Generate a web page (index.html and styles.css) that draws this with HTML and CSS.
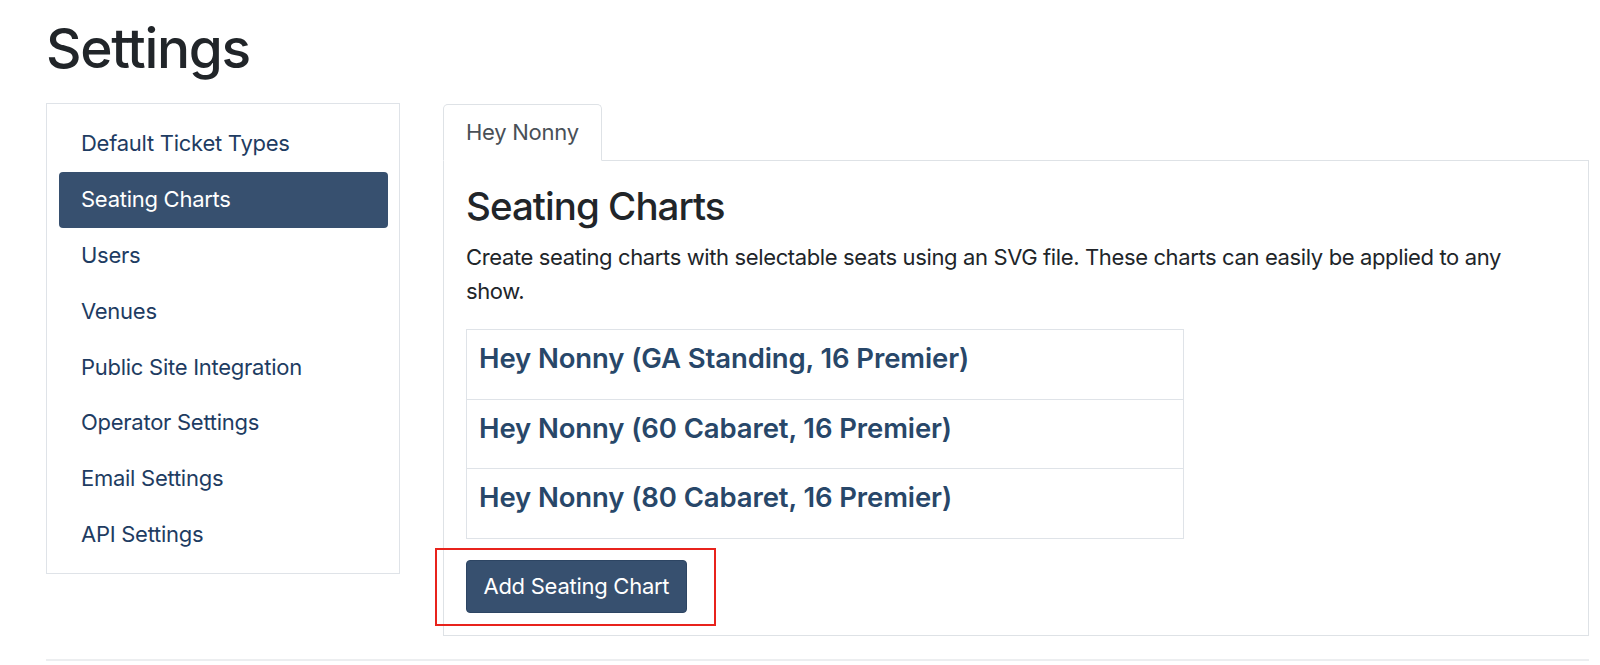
FILE: index.html
```html
<!DOCTYPE html>
<html lang="en">
<head>
<meta charset="utf-8">
<title>Settings</title>
<link rel="stylesheet" href="styles.css">
</head>
<body>
<div class="page">
  <h1 class="page-title">Settings</h1>
  <div class="layout">
    <aside class="sidebar">
      <nav class="side-nav">
        <a class="side-link" href="#">Default Ticket Types</a>
        <a class="side-link active" href="#">Seating Charts</a>
        <a class="side-link" href="#">Users</a>
        <a class="side-link" href="#">Venues</a>
        <a class="side-link" href="#">Public Site Integration</a>
        <a class="side-link" href="#">Operator Settings</a>
        <a class="side-link" href="#">Email Settings</a>
        <a class="side-link" href="#">API Settings</a>
      </nav>
    </aside>
    <main class="main">
      <div class="tabs">
        <a class="tab active" href="#">Hey Nonny</a>
      </div>
      <section class="panel">
        <h3 class="panel-title">Seating Charts</h3>
        <p class="panel-desc">Create seating charts with selectable seats using an SVG file. These charts can easily be applied to any show.</p>
        <div class="chart-list">
          <a class="chart-item" href="#"><h5 class="chart-name">Hey Nonny (GA Standing, 16 Premier)</h5></a>
          <a class="chart-item" href="#"><h5 class="chart-name">Hey Nonny (60 Cabaret, 16 Premier)</h5></a>
          <a class="chart-item" href="#"><h5 class="chart-name">Hey Nonny (80 Cabaret, 16 Premier)</h5></a>
        </div>
        <div class="action-wrap">
          <button class="btn-primary" type="button">Add Seating Chart</button>
        </div>
      </section>
    </main>
  </div>
  <hr class="divider">
</div>
</body>
</html>
```
FILE: styles.css
```css
* { box-sizing: border-box; }

html, body {
  margin: 0;
  padding: 0;
  background: #ffffff;
}

body {
  font-family: "Inter", "Noto Sans", "Liberation Sans", sans-serif;
  font-size: 22px;
  line-height: 1.5;
  color: #212529;
  letter-spacing: -0.012em;
}

.page {
  padding: 15px 11px 0 46px;
}

.page-title {
  margin: 0 0 22px 0;
  font-size: 55px;
  font-weight: 500;
  line-height: 1.2;
  color: #212529;
  letter-spacing: -0.024em;
}

.layout {
  display: flex;
  align-items: flex-start;
  gap: 43px;
}

.sidebar {
  width: 354px;
  flex: 0 0 354px;
  border: 1px solid #dfe3e8;
  padding: 12px 11px 11px 12px;
}

.side-nav {
  display: flex;
  flex-direction: column;
}

.side-link {
  display: block;
  padding: 11.4px 22px;
  line-height: 33px;
  color: #1e3c62;
  text-decoration: none;
  border-radius: 4px;
}

.side-link.active {
  background: #37506f;
  color: #ffffff;
}

.main {
  flex: 1 1 auto;
  margin-top: 1px;
}

.tabs {
  display: flex;
  border-bottom: 1px solid #dee2e6;
}

.tab {
  display: block;
  padding: 11px 22px;
  line-height: 33px;
  color: #495057;
  text-decoration: none;
  border: 1px solid #dee2e6;
  border-bottom-color: #ffffff;
  border-radius: 5px 5px 0 0;
  margin-bottom: -1px;
  background: #ffffff;
}

.panel {
  border: 1px solid #dee2e6;
  border-top: none;
  padding: 22px 22px 22px 22px;
}

.panel-title {
  margin: 0 0 12px 0;
  font-size: 38.5px;
  font-weight: 500;
  line-height: 1.2;
  color: #212529;
  letter-spacing: -0.025em;
}

.panel-desc {
  margin: 0 0 21px 0;
  max-width: 1060px;
  line-height: 33.5px;
  color: #212529;
  letter-spacing: -0.017em;
}

.chart-list {
  width: 718px;
  border: 1px solid #dfe3e8;
  display: flex;
  flex-direction: column;
  margin-bottom: 21px;
}

.chart-item {
  display: block;
  padding: 12px 12px;
  text-decoration: none;
  border-top: 1px solid #dfe3e8;
}

.chart-item:first-child {
  border-top: none;
}

.chart-name {
  margin: 0 0 11.5px 0;
  font-size: 27.5px;
  font-weight: 600;
  line-height: 1.2;
  color: #284769;
  letter-spacing: -0.004em;
}

.action-wrap {
  display: flex;
  position: relative;
}

.action-wrap::after {
  content: "";
  position: absolute;
  left: -31px;
  top: -12px;
  width: 277px;
  height: 74px;
  border: 2px solid #e8231c;
  pointer-events: none;
}

.btn-primary {
  font-family: inherit;
  font-size: 22px;
  letter-spacing: inherit;
  line-height: 33px;
  padding: 9px 16.5px;
  color: #ffffff;
  background: #37506f;
  border: 1px solid #2d4563;
  border-radius: 4px;
  cursor: pointer;
}

.divider {
  margin: 23px 0 0 0;
  border: none;
  border-top: 2px solid #eceef0;
}
```
